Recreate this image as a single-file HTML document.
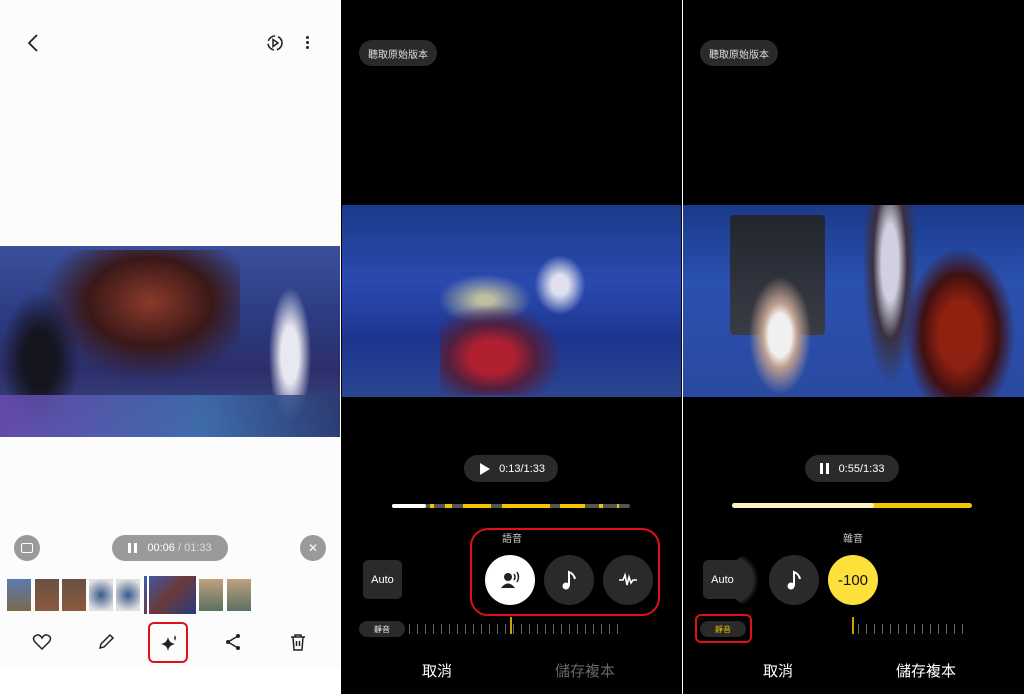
<!DOCTYPE html>
<html><head><meta charset="utf-8"><style>
*{margin:0;padding:0;box-sizing:border-box}
body{width:1024px;height:694px;background:#fff;position:relative;overflow:hidden;font-family:"Liberation Sans","Noto Sans CJK TC",sans-serif}
.a{position:absolute}
.pill{position:absolute;background:#2a2a2a;color:#ddd;border-radius:14px;font-size:10px;display:flex;align-items:center;justify-content:center}
.circ{position:absolute;border-radius:50%;display:flex;align-items:center;justify-content:center}
.ticks{position:absolute;height:10px;background:repeating-linear-gradient(90deg,#666 0 1px,transparent 1px 8px)}
</style></head><body>
<!-- Panel 1 -->
<div class="a" style="left:0;top:0;width:341px;height:668px;background:#fcfcfc"></div>
<svg class="a" style="left:24px;top:32px" width="20" height="22"><path d="M13 3 L5 11 L13 19" stroke="#222" stroke-width="1.8" fill="none"/></svg>
<svg class="a" style="left:264px;top:32px" width="22" height="22"><circle cx="11" cy="11" r="7" stroke="#222" stroke-width="1.6" fill="none" stroke-dasharray="9 3"/><path d="M9 7.5 L14 11 L9 14.5Z" stroke="#222" stroke-width="1.5" fill="none"/></svg>
<div class="a" style="left:306px;top:36px;width:3px;height:3px;background:#222;border-radius:50%;box-shadow:0 5px 0 #222,0 10px 0 #222"></div>
<div class="a" style="left:0;top:246px;width:340px;height:191px;background:linear-gradient(180deg,#3b4f9a 0%,#2b3a80 40%,#2c2e6a 65%,#40528f 100%)"></div>
<div class="a" style="left:40px;top:250px;width:200px;height:130px;background:radial-gradient(ellipse at 55% 40%,#8a3a2a 0%,#3a1818 40%,transparent 70%)"></div>
<div class="a" style="left:0;top:290px;width:80px;height:140px;background:radial-gradient(ellipse,#151520 30%,transparent 70%)"></div>
<div class="a" style="left:265px;top:275px;width:50px;height:160px;background:radial-gradient(ellipse,#e8e8f0 25%,transparent 60%)"></div>
<div class="a" style="left:0;top:395px;width:340px;height:42px;background:linear-gradient(90deg,#6a4ab0,#3e70b0 60%,#2a3a70);opacity:.85"></div>
<div class="circ" style="left:14px;top:535px;width:26px;height:26px;background:#9a9a9a"><div style="width:12px;height:10px;border:1.5px solid #fff;border-radius:2px"></div></div>
<div class="pill" style="left:112px;top:535px;width:116px;height:26px;background:#9a9a9a;color:#fff;font-size:11px;border-radius:13px"><span style="display:inline-block;width:3px;height:10px;background:#fff;margin-right:3px"></span><span style="display:inline-block;width:3px;height:10px;background:#fff;margin-right:10px"></span>00:06 <span style="color:#ddd">&nbsp;/ 01:33</span></div>
<div class="circ" style="left:300px;top:535px;width:26px;height:26px;background:#9a9a9a;color:#fff;font-size:12px">✕</div>
<div class="a" style="left:7px;top:579px;width:24px;height:32px;background:linear-gradient(#5a7bb0,#7a6a4a)"></div>
<div class="a" style="left:35px;top:579px;width:24px;height:32px;background:linear-gradient(#6a5040,#8a5a40)"></div>
<div class="a" style="left:62px;top:579px;width:24px;height:32px;background:linear-gradient(#6a5040,#8a5a40)"></div>
<div class="a" style="left:89px;top:579px;width:24px;height:32px;background:radial-gradient(circle,#3a5a8a,#e0e0e0 80%)"></div>
<div class="a" style="left:116px;top:579px;width:24px;height:32px;background:radial-gradient(circle,#3a5a8a,#e0e0e0 80%)"></div>
<div class="a" style="left:144px;top:576px;width:52px;height:38px;background:linear-gradient(135deg,#3a5ab0,#6a3a3a 50%,#2a3a80)"></div>
<div class="a" style="left:147px;top:573px;width:2px;height:44px;background:#fff"></div>
<div class="a" style="left:199px;top:579px;width:24px;height:32px;background:linear-gradient(#c0a080,#5a7060)"></div>
<div class="a" style="left:227px;top:579px;width:24px;height:32px;background:linear-gradient(#c0a080,#5a7060)"></div>
<svg class="a" style="left:32px;top:633px" width="20" height="18"><path d="M10 16 L3 9 Q0 5 3 3 Q7 0 10 5 Q13 0 17 3 Q20 5 17 9Z" stroke="#222" stroke-width="1.5" fill="none"/></svg>
<svg class="a" style="left:96px;top:632px" width="20" height="20"><path d="M4 16 L5 12 L14 3 L17 6 L8 15Z" stroke="#222" stroke-width="1.5" fill="none"/></svg>
<div class="a" style="left:148px;top:622px;width:40px;height:41px;border:2px solid #e0101a;border-radius:6px"></div>
<svg class="a" style="left:160px;top:633px" width="20" height="20"><path d="M8 4 Q9 10 15 11 Q9 12 8 18 Q7 12 1 11 Q7 10 8 4Z" fill="#222"/><path d="M15 2 L16 5 L15 8 L14 5Z" fill="#222"/></svg>
<svg class="a" style="left:224px;top:632px" width="20" height="20"><circle cx="14" cy="4" r="2" fill="#222"/><circle cx="14" cy="16" r="2" fill="#222"/><circle cx="4" cy="10" r="2" fill="#222"/><path d="M14 4 L4 10 L14 16" stroke="#222" stroke-width="1.5" fill="none"/></svg>
<svg class="a" style="left:288px;top:632px" width="20" height="20"><path d="M3 5 H17 M7 5 V3 H13 V5 M5 5 L6 18 H14 L15 5 M8.5 9 V14 M11.5 9 V14" stroke="#222" stroke-width="1.5" fill="none"/></svg>

<!-- Panel 2 -->
<div class="a" style="left:341px;top:0;width:341px;height:694px;background:#000"></div>
<div class="pill" style="left:359px;top:40px;width:78px;height:26px">聽取原始版本</div>
<div class="a" style="left:342px;top:205px;width:339px;height:192px;background:linear-gradient(180deg,#1a3a8a 0%,#2a4ab0 40%,#1d3590 70%,#2a4590 100%)"></div>
<div class="a" style="left:430px;top:270px;width:110px;height:60px;background:radial-gradient(ellipse,#c0c0a0 10%,transparent 60%)"></div>
<div class="a" style="left:440px;top:300px;width:130px;height:95px;background:radial-gradient(ellipse at 40% 60%,#b02030 20%,#502040 40%,transparent 65%)"></div>
<div class="a" style="left:530px;top:250px;width:60px;height:70px;background:radial-gradient(ellipse,#e0e0f0 20%,transparent 60%)"></div>
<div class="pill" style="left:464px;top:455px;width:94px;height:27px;color:#fff;font-size:11px;border-radius:14px"><svg width="14" height="14" style="margin-right:8px"><path d="M3 1 L13 7 L3 13Z" fill="#fff"/></svg>0:13/1:33</div>
<div class="a" style="left:392px;top:504px;width:238px;height:4px;background:#555;border-radius:2px"></div>
<div class="a" style="left:392px;top:504px;width:34px;height:4px;background:#fff;border-radius:2px"></div>
<div class="a" style="left:430px;top:504px;width:4px;height:4px;background:#f5c400"></div>
<div class="a" style="left:445px;top:504px;width:7px;height:4px;background:#f5c400"></div>
<div class="a" style="left:463px;top:504px;width:28px;height:4px;background:#f5c400"></div>
<div class="a" style="left:502px;top:504px;width:48px;height:4px;background:#f5c400"></div>
<div class="a" style="left:560px;top:504px;width:25px;height:4px;background:#f5c400"></div>
<div class="a" style="left:599px;top:504px;width:4px;height:4px;background:#f5c400"></div>
<div class="a" style="left:617px;top:504px;width:2px;height:4px;background:#f5c400"></div>
<div class="a" style="left:502px;top:530px;font-size:10px;color:#ccc">語音</div>
<div class="a" style="left:470px;top:528px;width:190px;height:88px;border:2px solid #e0101a;border-radius:18px"></div>
<div class="a" style="left:363px;top:560px;width:39px;height:39px;background:#2a2a2a;border-radius:5px;color:#fff;font-size:11px;display:flex;align-items:center;justify-content:center">Auto</div>
<div class="circ" style="left:485px;top:555px;width:50px;height:50px;background:#fff"><svg width="22" height="20"><circle cx="9" cy="7" r="4" fill="#222"/><path d="M2 18 Q9 9 16 18Z" fill="#222"/><path d="M15 4 Q17 7 15 10 M18 2 Q21 7 18 12" stroke="#222" stroke-width="1.5" fill="none"/></svg></div>
<div class="circ" style="left:544px;top:555px;width:50px;height:50px;background:#2a2a2a"><svg width="20" height="22"><circle cx="7" cy="17" r="3.5" fill="#fff"/><path d="M10 17 V3 Q15 5 16 10" stroke="#fff" stroke-width="2" fill="none"/></svg></div>
<div class="circ" style="left:603px;top:555px;width:50px;height:50px;background:#2a2a2a"><svg width="20" height="16"><path d="M1 8 H5 L7 3 L9 13 L11 5 L13 11 L15 8 H19" stroke="#fff" stroke-width="1.6" fill="none"/></svg></div>
<div class="pill" style="left:359px;top:621px;width:46px;height:16px;font-size:8px;color:#eee">靜音</div>
<div class="ticks" style="left:409px;top:624px;width:210px"></div>
<div class="a" style="left:510px;top:617px;width:2px;height:17px;background:#c9a400"></div>
<div class="a" style="left:422px;top:660px;font-size:15px;color:#fff">取消</div>
<div class="a" style="left:555px;top:660px;font-size:15px;color:#666">儲存複本</div>

<!-- Panel 3 -->
<div class="a" style="left:682px;top:0;width:342px;height:694px;background:#000;border-left:1px solid #fff"></div>
<div class="pill" style="left:700px;top:40px;width:78px;height:26px">聽取原始版本</div>
<div class="a" style="left:683px;top:205px;width:341px;height:192px;background:linear-gradient(180deg,#1a3a8a 0%,#2a50b0 40%,#2a4aa0 100%)"></div>
<div class="a" style="left:730px;top:215px;width:95px;height:120px;background:linear-gradient(#222,#3a3a3a);border-radius:4px;opacity:.9"></div>
<div class="a" style="left:740px;top:260px;width:80px;height:137px;background:radial-gradient(ellipse at 50% 55%,#f0f0f0 20%,#c0a090 30%,transparent 55%)"></div>
<div class="a" style="left:860px;top:205px;width:60px;height:192px;background:radial-gradient(ellipse at 50% 30%,#d0d0e0 20%,#3a3040 40%,transparent 65%)"></div>
<div class="a" style="left:900px;top:240px;width:120px;height:157px;background:radial-gradient(ellipse at 50% 60%,#902010 25%,#401010 45%,transparent 65%)"></div>
<div class="pill" style="left:805px;top:455px;width:94px;height:27px;color:#fff;font-size:11px;border-radius:14px"><span style="display:inline-block;width:3px;height:11px;background:#fff;margin-right:3px"></span><span style="display:inline-block;width:3px;height:11px;background:#fff;margin-right:10px"></span>0:55/1:33</div>
<div class="a" style="left:732px;top:503px;width:240px;height:5px;background:#f5c400;border-radius:3px"></div>
<div class="a" style="left:732px;top:503px;width:142px;height:5px;background:#fff3c0;border-radius:3px"></div>
<div class="a" style="left:843px;top:530px;font-size:10px;color:#ccc">雜音</div>
<div class="a" style="left:730px;top:556px;width:30px;height:48px;border-radius:50%;background:radial-gradient(circle at 0 50%,#2a2a2a 60%,#000 75%)"></div>
<div class="a" style="left:703px;top:560px;width:39px;height:39px;background:#2a2a2a;border-radius:5px;color:#fff;font-size:11px;display:flex;align-items:center;justify-content:center">Auto</div>
<div class="circ" style="left:769px;top:555px;width:50px;height:50px;background:#2a2a2a"><svg width="20" height="22"><circle cx="7" cy="17" r="3.5" fill="#fff"/><path d="M10 17 V3 Q15 5 16 10" stroke="#fff" stroke-width="2" fill="none"/></svg></div>
<div class="circ" style="left:828px;top:555px;width:50px;height:50px;background:#fde03a;color:#111;font-size:15px">-100</div>
<div class="a" style="left:695px;top:614px;width:57px;height:29px;border:2px solid #e0101a;border-radius:6px"></div>
<div class="pill" style="left:700px;top:621px;width:46px;height:16px;font-size:8px;color:#e8c000">靜音</div>
<div class="a" style="left:852px;top:617px;width:2px;height:17px;background:#c9a400"></div>
<div class="ticks" style="left:858px;top:624px;width:106px"></div>
<div class="a" style="left:763px;top:660px;font-size:15px;color:#fff">取消</div>
<div class="a" style="left:896px;top:660px;font-size:15px;color:#fff">儲存複本</div>
</body></html>
